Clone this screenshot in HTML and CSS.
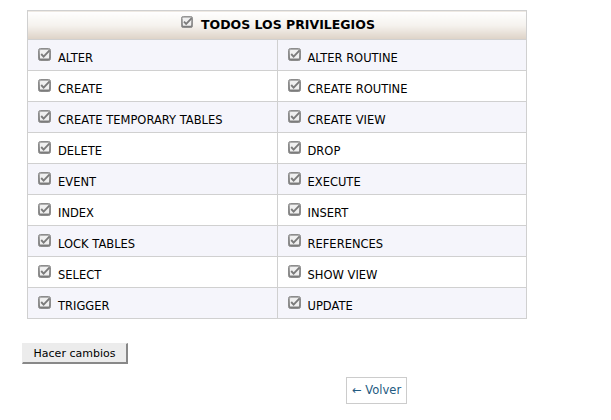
FILE: index.html
```html
<!DOCTYPE html>
<html>
<head>
<meta charset="utf-8">
<link rel="stylesheet" href="styles.css">
</head>
<body>
<svg width="0" height="0" class="defs">
  <defs>
    <linearGradient id="cbg" x1="0" y1="0" x2="0" y2="1">
      <stop offset="0" stop-color="#b4b4b4"/>
      <stop offset="1" stop-color="#777"/>
    </linearGradient>
    <symbol id="cb" viewBox="0 0 13 13">
      <rect x="0.5" y="0.5" width="12" height="12" rx="2" fill="url(#cbg)" stroke="#8c8c8c"/>
      <rect x="2" y="2" width="9" height="8.5" rx="0.5" fill="#f0f0f0"/>
      <path d="M3.2 6 L5.6 8.6 L11.6 2.3" fill="none" stroke="#7b7b7b" stroke-width="1.9"/>
    </symbol>
  </defs>
</svg>
<div class="page">
  <table class="priv">
    <thead>
      <tr><th colspan="2"><svg class="ic hic"><use href="#cb"/></svg>TODOS LOS PRIVILEGIOS</th></tr>
    </thead>
    <tbody>
      <tr class="odd"><td><svg class="ic"><use href="#cb"/></svg>ALTER</td><td><svg class="ic"><use href="#cb"/></svg>ALTER ROUTINE</td></tr>
      <tr><td><svg class="ic"><use href="#cb"/></svg>CREATE</td><td><svg class="ic"><use href="#cb"/></svg>CREATE ROUTINE</td></tr>
      <tr class="odd"><td><svg class="ic"><use href="#cb"/></svg>CREATE TEMPORARY TABLES</td><td><svg class="ic"><use href="#cb"/></svg>CREATE VIEW</td></tr>
      <tr><td><svg class="ic"><use href="#cb"/></svg>DELETE</td><td><svg class="ic"><use href="#cb"/></svg>DROP</td></tr>
      <tr class="odd"><td><svg class="ic"><use href="#cb"/></svg>EVENT</td><td><svg class="ic"><use href="#cb"/></svg>EXECUTE</td></tr>
      <tr><td><svg class="ic"><use href="#cb"/></svg>INDEX</td><td><svg class="ic"><use href="#cb"/></svg>INSERT</td></tr>
      <tr class="odd"><td><svg class="ic"><use href="#cb"/></svg>LOCK TABLES</td><td><svg class="ic"><use href="#cb"/></svg>REFERENCES</td></tr>
      <tr><td><svg class="ic"><use href="#cb"/></svg>SELECT</td><td><svg class="ic"><use href="#cb"/></svg>SHOW VIEW</td></tr>
      <tr class="odd"><td><svg class="ic"><use href="#cb"/></svg>TRIGGER</td><td><svg class="ic"><use href="#cb"/></svg>UPDATE</td></tr>
    </tbody>
  </table>
  <button class="submit">Hacer cambios</button>
  <div class="back-wrap"><a class="back" href="#">← Volver</a></div>
</div>
</body>
</html>
```
FILE: styles.css
```css
html, body { margin: 0; padding: 0; background: #fff; }
body { font-family: "DejaVu Sans", Verdana, sans-serif; font-size: 11.5px; color: #000; }
.defs { position: absolute; }
.page { padding: 10px 0 0 22px; width: 505px; }
.priv {
  border-collapse: collapse;
  width: 500px;
  margin-left: 5px;
  border: 1px solid #d0d0d0;
}
.priv th {
  padding: 5px 0 7px 0;
  font-size: 12.5px;
  line-height: 15px;
  font-weight: bold;
  text-align: center;
  background: linear-gradient(#ffffff 0%, #f5f2ee 50%, #ddd2c6 100%);
  border-bottom: 1px solid #d0d0d0;
  vertical-align: top;
}
.priv th .hic { margin-left: 2px; }
.priv td {
  width: 50%;
  padding: 8px 0 5px 10px;
  border: 1px solid #d0d0d0;
  vertical-align: top;
  line-height: 14px;
}
.priv tr.odd td { background: #f5f5fb; }
.ic { width: 13px; height: 13px; margin-right: 7px; vertical-align: 1px; }
.hic { width: 12px; height: 12px; margin-right: 8px; }
.submit {
  display: block;
  margin-top: 24px;
  font-family: "DejaVu Sans", Verdana, sans-serif;
  font-size: 11px;
  line-height: 14px;
  color: #000;
  background: #ececec;
  border: 1px solid #ececec;
  border-right: 2px solid #888;
  border-bottom: 2px solid #888;
  padding: 3px 10px 2px 10px;
  height: 21px;
  width: 106px;
}
.back-wrap { display: flex; margin-top: 13px; padding-left: 324px; }
.back {
  display: inline-block;
  border: 1px solid #ccc;
  padding: 5px 5px 6px 5px;
  color: #235a81;
  text-decoration: none;
  font-size: 11.5px;
  line-height: 14px;
}
```
